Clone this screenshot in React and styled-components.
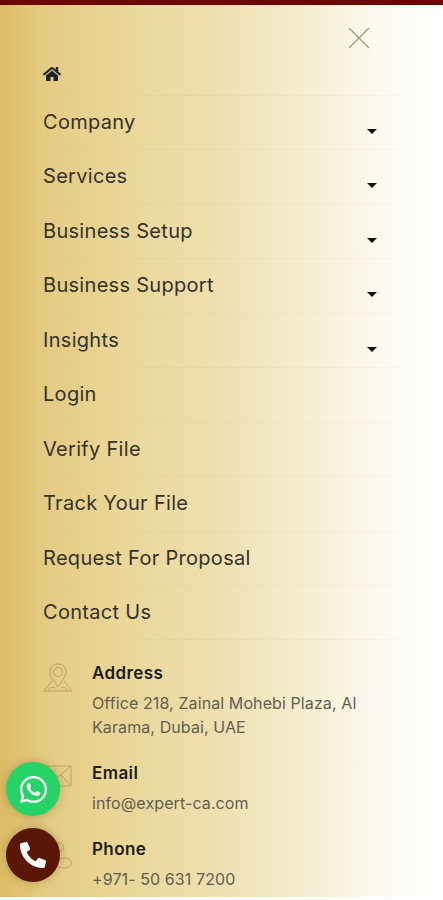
import React from "react";
import styled, { createGlobalStyle } from "styled-components";
import { FaHome, FaWhatsapp, FaPhoneAlt } from "react-icons/fa";

const GlobalStyle = createGlobalStyle`
    html, body {
        margin: 0;
        height: 100%;
        overflow: hidden;
        background: #fff;
    }
    * { box-sizing: border-box; }
`;

const Page = styled.div`
    width: 443px;
    height: 900px;
    position: relative;
    overflow: hidden;
    font-family: "Inter", "Liberation Sans", sans-serif;
    color: #35322b;
    border-top: 5px solid #6d0707;
    background: #fff;
`;

const Drawer = styled.div`
    height: 892px;
    padding: 21px 43px 0;
    background: linear-gradient(90deg, #dcbc64 0%, #e4cb82 10%, #e9d595 25%, #efe0b0 50%, #f6eed3 70%, #fcf9ef 85%, #fff 100%);
`;

const CloseRow = styled.div`
    display: flex;
    justify-content: flex-end;
    padding-right: 29px;
    height: 29px;
`;

const Nav = styled.ul`
    list-style: none;
    margin: 0;
    padding: 0;
    width: 355px;
`;

const NavItem = styled.li`
    display: flex;
    justify-content: space-between;
    height: ${(p) => (p.$home ? "41px" : "54.45px")};
    padding-top: ${(p) => (p.$home ? "10px" : "13px")};
    border-bottom: 1px solid rgba(170, 140, 70, 0.05);
    font-size: 20px;
    line-height: 26px;
    letter-spacing: 0.3px;
`;

const Caret = styled.span`
    width: 0;
    height: 0;
    margin: 20px 21px 0 0;
    border-left: 5.5px solid transparent;
    border-right: 5.5px solid transparent;
    border-top: 5px solid #111;
`;

const Contact = styled.div`
    margin-top: 21px;
    display: flex;
    flex-direction: column;
`;

const ContactRow = styled.div`
    display: grid;
    grid-template-columns: 49px 1fr;
    min-height: ${(p) => p.$h}px;
`;

const ContactTitle = styled.div`
    font-size: 17px;
    line-height: 24px;
    font-weight: 600;
    letter-spacing: 0.4px;
    color: #1d1d1d;
`;

const ContactText = styled.div`
    font-size: 16px;
    line-height: 24px;
    margin-top: 6px;
    letter-spacing: 0.1px;
    color: #625e50;
    width: 275px;
`;

const IconBox = styled.svg`
    width: 30px;
    height: 30px;
    margin-top: ${(p) => p.$top || 2}px;
    fill: none;
    stroke: #b49a55;
    stroke-width: 1;
    opacity: 0.8;
`;

const Floating = styled.a`
    position: absolute;
    left: 6px;
    top: ${(p) => p.$top}px;
    width: 54px;
    height: 54px;
    border-radius: 50%;
    display: flex;
    align-items: center;
    justify-content: center;
    color: #fff;
    font-size: ${(p) => p.$size}px;
    background: ${(p) => p.$bg};
    box-shadow: 0 0 10px rgba(90, 70, 20, 0.35);
`;

const menu = [
    ["Company", true],
    ["Services", true],
    ["Business Setup", true],
    ["Business Support", true],
    ["Insights", true],
    ["Login"],
    ["Verify File"],
    ["Track Your File"],
    ["Request For Proposal"],
    ["Contact Us"],
];

export default function App() {
    return (
        <Page>
            <GlobalStyle />
            <Drawer>
                <CloseRow>
                    <svg width="24" height="24" viewBox="0 0 24 24" stroke="#a89a72" strokeWidth="1.3" fill="none">
                        <path d="M2 2 L22 22 M22 2 L2 22" />
                    </svg>
                </CloseRow>
                <Nav>
                    <NavItem $home>
                        <FaHome size={18} color="#1c2430" />
                    </NavItem>
                    {menu.map(([label, caret]) => (
                        <NavItem key={label}>
                            {label}
                            {caret && <Caret />}
                        </NavItem>
                    ))}
                </Nav>
                <Contact>
                    <ContactRow $h={100}>
                        <IconBox viewBox="0 0 30 30">
                            <path d="M15 1 C9.500 1 7 5 7 9 C7 14 12 19 15 24 C18 19 23 14 23 9 C23 5 20.500 1 15 1 Z" />
                            <circle cx="15" cy="9" r="4.500" />
                            <path d="M9 18 L1 28 H29 L21 18 M5 28 C7 24 10 24 12 25 M25 28 C23 24 20 24 18 25" />
                        </IconBox>
                        <div>
                            <ContactTitle>Address</ContactTitle>
                            <ContactText>Office 218, Zainal Mohebi Plaza, Al Karama, Dubai, UAE</ContactText>
                        </div>
                    </ContactRow>
                    <ContactRow $h={76}>
                        <IconBox viewBox="0 0 30 30" $top={4}>
                            <path d="M1 1 H28 V21 H1 Z M1 1 L15 12 L28 1 M18 10 L28 21" />
                        </IconBox>
                        <div>
                            <ContactTitle>Email</ContactTitle>
                            <ContactText>info@expert-ca.com</ContactText>
                        </div>
                    </ContactRow>
                    <ContactRow $h={76}>
                        <IconBox viewBox="0 0 30 30">
                            <path d="M14 3 L20 6 L21 10 L17 13 L13 9 Z" />
                            <path d="M12 24 C14 20 19 20 21 19 C26 19 30 22 28 26 C26 29 20 30 15 28 Z" />
                        </IconBox>
                        <div>
                            <ContactTitle>Phone</ContactTitle>
                            <ContactText>+971- 50 631 7200</ContactText>
                        </div>
                    </ContactRow>
                </Contact>
            </Drawer>
            <Floating $top={757} $bg="#25d366" $size={31}>
                <FaWhatsapp />
            </Floating>
            <Floating $top={823} $bg="#5a1606" $size={26}>
                <FaPhoneAlt />
            </Floating>
        </Page>
    );
}
